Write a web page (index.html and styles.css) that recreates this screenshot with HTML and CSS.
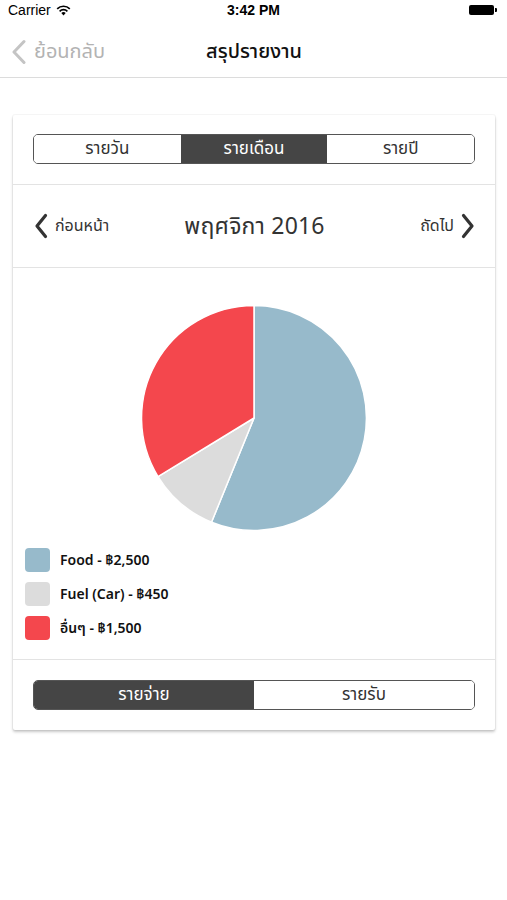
FILE: index.html
```html
<!DOCTYPE html>
<html lang="th">
<head>
<meta charset="utf-8">
<title>สรุปรายงาน</title>
<link rel="stylesheet" href="styles.css">
</head>
<body>
<div class="statusbar">
  <div class="sb-left">Carrier
    <svg class="wifi" width="15" height="11" viewBox="0 0 15 11">
      <path d="M7.5 10.5 L5.3 8.1 A3.2 3.2 0 0 1 9.7 8.1 Z" fill="#000"/>
      <path d="M3.6 6.3 A5.6 5.6 0 0 1 11.4 6.3" fill="none" stroke="#000" stroke-width="1.7"/>
      <path d="M1.2 3.8 A9 9 0 0 1 13.8 3.8" fill="none" stroke="#000" stroke-width="1.7"/>
    </svg>
  </div>
  <div class="sb-time">3:42 PM</div>
  <div class="sb-right">
    <span class="battery"></span><span class="battery-tip"></span>
  </div>
</div>
<header class="navbar">
  <div class="nav-back">
    <svg width="15" height="26" viewBox="0 0 15 26"><path d="M13 2.5 L3 13 L13 23.5" fill="none" stroke="#c4c4c4" stroke-width="3" stroke-linecap="round" stroke-linejoin="round"/></svg>
    <span>ย้อนกลับ</span>
  </div>
  <div class="nav-title">สรุปรายงาน</div>
  <div></div>
</header>

<main class="card">
  <section class="sec sec-seg">
    <div class="seg">
      <div class="seg-item">รายวัน</div>
      <div class="seg-item active">รายเดือน</div>
      <div class="seg-item">รายปี</div>
    </div>
  </section>
  <section class="sec sec-period">
    <div class="period-btn">
      <svg width="14" height="26" viewBox="0 0 14 26"><path d="M11.5 2.5 L3 13 L11.5 23.5" fill="none" stroke="#333" stroke-width="3.2" stroke-linecap="round" stroke-linejoin="round"/></svg>
      <span>ก่อนหน้า</span>
    </div>
    <div class="period-title">พฤศจิกา 2016</div>
    <div class="period-btn next">
      <span>ถัดไป</span>
      <svg width="14" height="26" viewBox="0 0 14 26"><path d="M2.5 2.5 L11 13 L2.5 23.5" fill="none" stroke="#333" stroke-width="3.2" stroke-linecap="round" stroke-linejoin="round"/></svg>
    </div>
  </section>
  <section class="sec sec-chart">
    <svg class="pie" width="226" height="226" viewBox="0 0 226 226">
      <path d="M113 113 L113 0.5 A112.5 112.5 0 1 1 70.5 217.2 Z" fill="#97bacb" stroke="#fff" stroke-width="1.5" stroke-linejoin="round"/>
      <path d="M113 113 L70.5 217.2 A112.5 112.5 0 0 1 17 171.6 Z" fill="#dcdcdc" stroke="#fff" stroke-width="1.5" stroke-linejoin="round"/>
      <path d="M113 113 L17 171.6 A112.5 112.5 0 0 1 113 0.5 Z" fill="#f4474d" stroke="#fff" stroke-width="1.5" stroke-linejoin="round"/>
    </svg>
    <ul class="legend">
      <li><span class="swatch sw-food"></span>Food - ฿2,500</li>
      <li><span class="swatch sw-fuel"></span>Fuel (Car) - ฿450</li>
      <li><span class="swatch sw-other"></span>อื่นๆ - ฿1,500</li>
    </ul>
  </section>
  <section class="sec sec-seg2">
    <div class="seg">
      <div class="seg-item active">รายจ่าย</div>
      <div class="seg-item">รายรับ</div>
    </div>
  </section>
</main>
</body>
</html>
```
FILE: styles.css
```css
* { box-sizing: border-box; }
html, body { margin: 0; padding: 0; background: #fff; }
body {
  width: 507px;
  min-height: 900px;
  font-family: "Noto Sans", "Noto Sans Thai", "Loma", "Garuda", "DejaVu Sans", sans-serif;
  color: #222;
}
.statusbar {
  height: 20px;
  display: flex;
  align-items: center;
  justify-content: space-between;
  padding: 0 8px 0 8px;
  font-family: "Liberation Sans", Arial, sans-serif;
  font-size: 14px;
  color: #000;
}
.sb-left { display: flex; align-items: center; gap: 5px; width: 120px; }
.sb-time { font-weight: bold; font-size: 14px; }
.sb-right { width: 120px; display: flex; justify-content: flex-end; align-items: center; padding-right: 2px; }
.battery { width: 25px; height: 10px; background: #000; border-radius: 2px; }
.battery-tip { width: 2px; height: 4px; background: #000; margin-left: 1px; border-radius: 0 1px 1px 0; }

.navbar {
  height: 58px;
  border-bottom: 1px solid #dcdcdc;
  display: grid;
  grid-template-columns: 1fr auto 1fr;
  align-items: center;
  padding: 7px 10px 0 11px;
}
.nav-back { display: flex; align-items: center; gap: 8px; color: #b3b3b3; font-size: 20px; }
.nav-title { font-size: 20px; color: #111; font-weight: 500; }

.card {
  margin: 37px 12px 20px 13px;
  background: #fff;
  box-shadow: 0 0 0 1px rgba(0,0,0,0.03), 0 2px 3px rgba(0,0,0,0.22);
  border-radius: 2px;
}
.sec { border-bottom: 1px solid #e3e3e3; }
.sec:last-child { border-bottom: none; }
.sec-seg { padding: 19px 20px 20px; }
.sec-seg2 { padding: 20px 20px 20px; }
.seg {
  display: flex;
  height: 30px;
  border: 1px solid #555;
  border-radius: 5px;
  overflow: hidden;
}
.seg-item {
  flex: 1;
  display: flex;
  align-items: center;
  justify-content: center;
  font-size: 17px;
  color: #333;
  background: #fff;
}
.seg-item.active { background: #454545; color: #fff; }

.sec-period {
  height: 83px;
  display: grid;
  grid-template-columns: 1fr auto 1fr;
  align-items: center;
  padding: 0 20px 0 21px;
}
.period-btn { display: flex; align-items: center; gap: 7px; font-size: 16px; color: #333; }
.period-btn.next { justify-content: flex-end; }
.period-title { font-size: 23px; color: #333; letter-spacing: 0.2px; }

.sec-chart { padding: 37px 0 19px; display: flex; flex-direction: column; }
.pie { display: block; margin: 0 auto; }
.legend { list-style: none; margin: 17px 0 0; padding: 0 0 0 12px; display: flex; flex-direction: column; gap: 10px; }
.legend li { display: flex; align-items: center; gap: 10px; height: 24px; font-size: 14px; font-weight: 600; color: #111; }
.swatch { width: 25px; height: 24px; border-radius: 4px; }
.sw-food { background: #97bacb; }
.sw-fuel { background: #dcdcdc; }
.sw-other { background: #f4474d; }
```
